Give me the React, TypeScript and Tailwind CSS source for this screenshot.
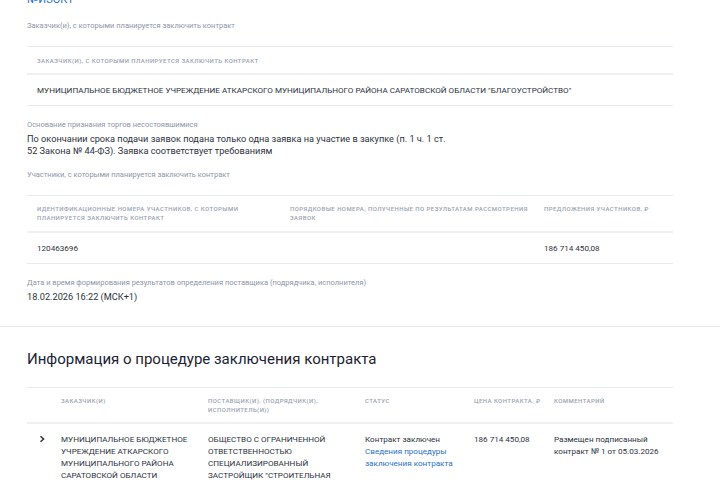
import React from "react";

const label = "text-[7.5px] leading-[10px] text-[#8d96a7]";
const caps =
  "text-[6px] leading-[9px] uppercase tracking-[0.45px] font-medium text-[#9aa2b1]";
const cell = "text-[8.1px] leading-[12px] text-[#2b3240]";
const body = "text-[9.2px] leading-[12px] text-[#2b3240]";

function Chevron() {
  return (
    <svg width="8" height="8" viewBox="0 0 8 8" className="mt-[2px]">
      <path
        d="M2.5 1.2 L5.6 4 L2.5 6.8"
        fill="none"
        stroke="#2b3240"
        strokeWidth="1.5"
      />
    </svg>
  );
}

export default function App() {
  return (
    <div className="w-[720px] h-[480px] overflow-hidden bg-white font-['Roboto','Liberation_Sans',sans-serif]">
      <div className="pl-[27px] w-[673px]">
        <div className="text-[11px] leading-[11px] text-[#2a6fc9] -mt-[6px]">
          №ИЗОКТ
        </div>
        <div className={`${label} mt-[16px]`}>
          Заказчик(и), с которыми планируется заключить контракт
        </div>
        <div className="mt-[15px] border-t border-[#e7eaef]">
          <div className="h-[28px] flex items-center px-[10px] border-b-2 border-[#eef0f3]">
            <span className={caps}>
              Заказчик(и), с которыми планируется заключить контракт
            </span>
          </div>
          <div className="h-[31px] flex items-center px-[10px] border-b border-[#e7eaef]">
            <span className={cell}>
              МУНИЦИПАЛЬНОЕ БЮДЖЕТНОЕ УЧРЕЖДЕНИЕ АТКАРСКОГО МУНИЦИПАЛЬНОГО
              РАЙОНА САРАТОВСКОЙ ОБЛАСТИ "БЛАГОУСТРОЙСТВО"
            </span>
          </div>
        </div>
        <div className={`${label} mt-[14px]`}>
          Основание признания торгов несостоявшимися
        </div>
        <p className={`${body} mt-[3px] w-[430px]`}>
          По окончании срока подачи заявок подана только одна заявка на участие
          в закупке (п. 1 ч. 1 ст. 52 Закона № 44-ФЗ). Заявка соответствует
          требованиям
        </p>
        <div className={`${label} mt-[13px]`}>
          Участники, с которыми планируется заключить контракт
        </div>
        <div className="mt-[15px] border-t border-[#e7eaef]">
          <div className="h-[37px] grid grid-cols-[253px_254px_1fr] items-start pt-[8px] border-b-2 border-[#eef0f3]">
            <div className={`${caps} pl-[10px] pr-[20px]`}>
              Идентификационные номера участников, с которыми планируется
              заключить контракт
            </div>
            <div className={`${caps} pl-[10px]`}>
              Порядковые номера, полученные по результатам рассмотрения заявок
            </div>
            <div className={`${caps} pl-[10px]`}>Предложения участников, ₽</div>
          </div>
          <div className="h-[31px] grid grid-cols-[253px_254px_1fr] items-center border-b border-[#e7eaef]">
            <div className={`${cell} pl-[10px]`}>120463696</div>
            <div />
            <div className={`${cell} pl-[10px]`}>186 714 450,08</div>
          </div>
        </div>
        <div className={`${label} mt-[14px]`}>
          Дата и время формирования результатов определения поставщика
          (подрядчика, исполнителя)
        </div>
        <div className={`${body} mt-[3px]`}>18.02.2026 16:22 (МСК+1)</div>
      </div>

      <div className="mt-[23px] border-t border-[#e7eaef]" />

      <div className="pl-[27px] w-[673px]">
        <h2 className="mt-[22px] text-[15px] leading-[20px] text-[#1c2333]">
          Информация о процедуре заключения контракта
        </h2>
        <div className="mt-[18px] border-t border-[#e7eaef]">
          <div className="h-[36px] grid grid-cols-[34px_147px_157px_109px_80px_1fr] items-start pt-[8px] border-b-2 border-[#eef0f3]">
            <div />
            <div className={caps}>Заказчик(и)</div>
            <div className={`${caps} pr-[30px]`}>
              Поставщик(и), (подрядчик(и), исполнитель(и))
            </div>
            <div className={caps}>Статус</div>
            <div className={caps}>Цена контракта, ₽</div>
            <div className={caps}>Комментарий</div>
          </div>
          <div className="grid grid-cols-[34px_147px_157px_109px_80px_1fr] pt-[9px]">
            <div className="pl-[11px]">
              <Chevron />
            </div>
            <div className={`${cell} pr-[12px]`}>
              МУНИЦИПАЛЬНОЕ БЮДЖЕТНОЕ УЧРЕЖДЕНИЕ АТКАРСКОГО МУНИЦИПАЛЬНОГО
              РАЙОНА САРАТОВСКОЙ ОБЛАСТИ
            </div>
            <div className={`${cell} pr-[24px]`}>
              ОБЩЕСТВО С ОГРАНИЧЕННОЙ ОТВЕТСТВЕННОСТЬЮ СПЕЦИАЛИЗИРОВАННЫЙ
              ЗАСТРОЙЩИК "СТРОИТЕЛЬНАЯ
            </div>
            <div className={cell}>
              <div>Контракт заключен</div>
              <div className="text-[#2a6fc9] pr-[12px]">
                Сведения процедуры заключения контракта
              </div>
            </div>
            <div className={cell}>186 714 450,08</div>
            <div className={`${cell} pr-[10px]`}>
              Размещен подписанный контракт № 1 от 05.03.2026
            </div>
          </div>
        </div>
      </div>
    </div>
  );
}
